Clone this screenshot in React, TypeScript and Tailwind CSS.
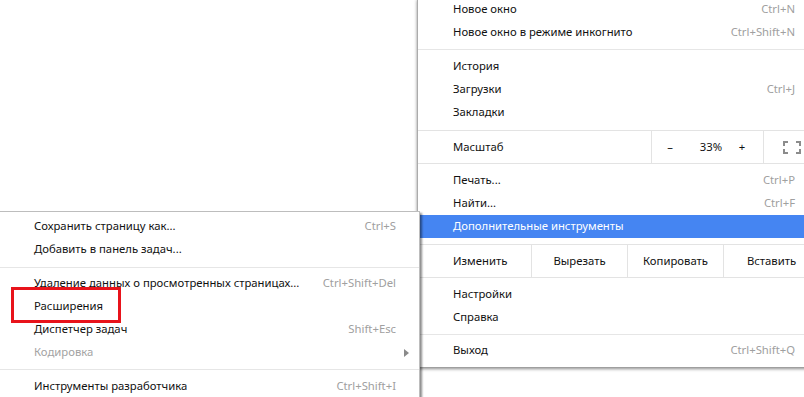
import React from "react";

type ItemProps = {
  label: string;
  shortcut?: string;
  active?: boolean;
  muted?: boolean;
  arrow?: boolean;
  side: "main" | "sub";
};

function Item({ label, shortcut, active, muted, arrow, side }: ItemProps) {
  const pad = side === "main" ? "pl-[35px] pr-[25px]" : arrow ? "pl-[35px] pr-[10px]" : "pl-[35px] pr-[23px]";
  return (
    <div
      className={`flex h-[23px] items-center justify-between ${pad} ${
        active ? "bg-[#4585f2] text-white" : muted ? "text-[#a3a3a3]" : "text-[#111111]"
      }`}
    >
      <span>{label}</span>
      {shortcut && <span className="text-[#a0a0a0]">{shortcut}</span>}
      {arrow && (
        <svg width="5" height="8" viewBox="0 0 5 8">
          <path d="M0 0 L5 4 L0 8 Z" fill="#8a8a8a" />
        </svg>
      )}
    </div>
  );
}

function Sep({ h, at }: { h: string; at: string }) {
  return (
    <div className={`${h} ${at}`}>
      <div className="h-px bg-[#e6e6e6]" />
    </div>
  );
}

function FullscreenIcon() {
  return (
    <svg width="18" height="13" viewBox="0 0 18 13" fill="none" stroke="#8c8c8c" strokeWidth="2">
      <path d="M1 5 V1 H5" />
      <path d="M13 1 H17 V5" />
      <path d="M17 8 V12 H13" />
      <path d="M5 12 H1 V8" />
    </svg>
  );
}

export default function App() {
  return (
    <div className="relative w-[804px] h-[397px] overflow-hidden bg-white text-[11.3px] font-['Noto_Sans',sans-serif]">
      {/* main chrome menu */}
      <div className="absolute left-[417px] top-[-2px] w-[403px] bg-white border-l border-[#ababab] pb-[5px] shadow-[0_2px_3px_rgba(0,0,0,0.45)]">
        <Item side="main" label="Новое окно" shortcut="Ctrl+N" />
        <Item side="main" label="Новое окно в режиме инкогнито" shortcut="Ctrl+Shift+N" />
        <Sep h="h-[11px]" at="pt-[5px]" />
        <Item side="main" label="История" />
        <Item side="main" label="Загрузки" shortcut="Ctrl+J" />
        <Item side="main" label="Закладки" />

        <div className="mt-[6px] flex h-[34px] items-center border-y border-[#e3e3e3] text-[#111111]">
          <div className="flex-1 pl-[35px]">Масштаб</div>
          <div className="flex h-full w-[112px] items-center border-l border-[#e3e3e3]">
            <span className="ml-[14px] w-[8px] text-center">–</span>
            <span className="ml-[25px] w-[24px] text-center">33%</span>
            <span className="ml-[15px] w-[8px] text-center">+</span>
          </div>
          <div className="flex h-full w-[57px] items-center justify-center border-l border-[#e3e3e3]">
            <FullscreenIcon />
          </div>
        </div>

        <div className="mt-[5px]">
          <Item side="main" label="Печать..." shortcut="Ctrl+P" />
          <Item side="main" label="Найти..." shortcut="Ctrl+F" />
          <Item side="main" label="Дополнительные инструменты" active />
        </div>

        <div className="mt-[6px] flex h-[34px] items-center border-y border-[#e3e3e3] text-[#111111]">
          <div className="w-[113px] pl-[35px]">Изменить</div>
          <div className="flex h-full w-[96px] items-center justify-center border-l border-[#e3e3e3]">Вырезать</div>
          <div className="flex h-full w-[96px] items-center justify-center border-l border-[#e3e3e3]">Копировать</div>
          <div className="flex h-full w-[96px] items-center justify-center border-l border-[#e3e3e3]">Вставить</div>
        </div>

        <div className="mt-[5px]">
          <Item side="main" label="Настройки" />
          <Item side="main" label="Справка" />
        </div>
        <Sep h="h-[10px]" at="pt-[5px]" />
        <Item side="main" label="Выход" shortcut="Ctrl+Shift+Q" />
      </div>

      {/* submenu: Дополнительные инструменты */}
      <div className="absolute left-[-1px] top-[211px] w-[421px] bg-white border-t border-r border-[#bdbdbd] pt-[3px] pb-[10px] shadow-[2px_2px_2px_rgba(0,0,0,0.45)]">
        <Item side="sub" label="Сохранить страницу как..." shortcut="Ctrl+S" />
        <Item side="sub" label="Добавить в панель задач..." />
        <Sep h="h-[11px]" at="pt-[6px]" />
        <Item side="sub" label="Удаление данных о просмотренных страницах..." shortcut="Ctrl+Shift+Del" />
        <Item side="sub" label="Расширения" />
        <Item side="sub" label="Диспетчер задач" shortcut="Shift+Esc" />
        <Item side="sub" label="Кодировка" muted arrow />
        <Sep h="h-[11px]" at="pt-[5px]" />
        <Item side="sub" label="Инструменты разработчика" shortcut="Ctrl+Shift+I" />
      </div>

      {/* highlight frame */}
      <div className="absolute left-[11px] top-[287px] h-[36px] w-[110px] border-[3px] border-[#e8131b]" />
    </div>
  );
}
